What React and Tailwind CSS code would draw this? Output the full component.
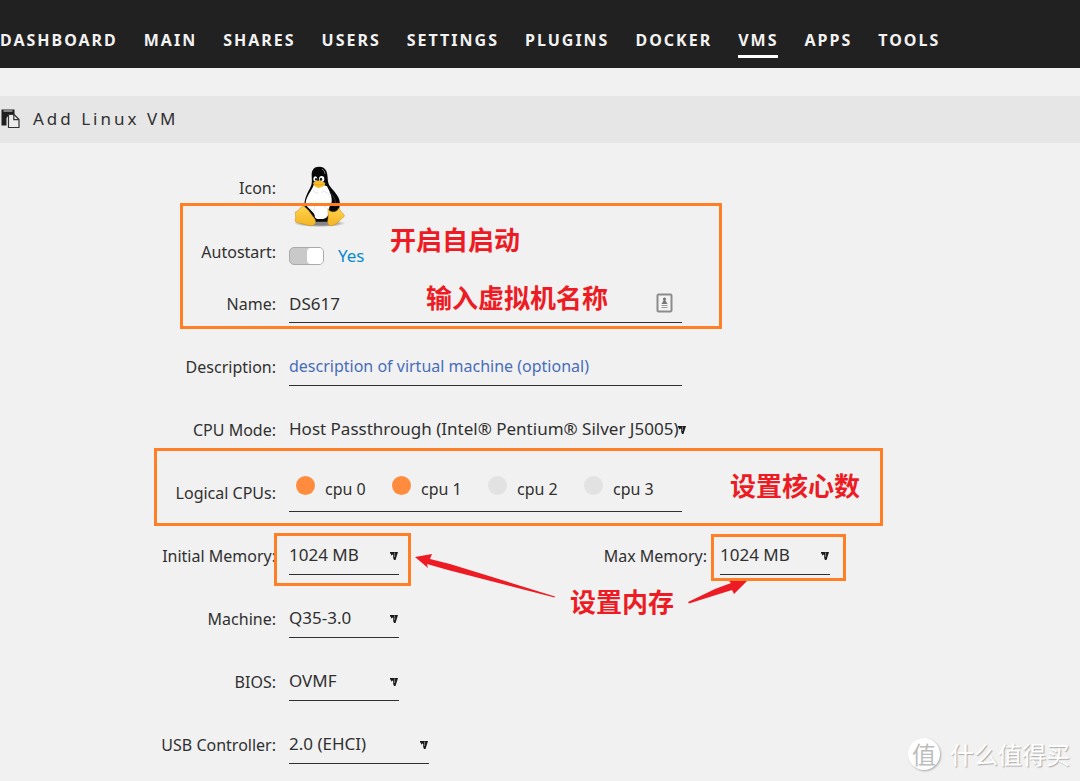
import React from "react";

const tabs = ["Dashboard", "Main", "Shares", "Users", "Settings", "Plugins", "Docker", "VMs", "Apps", "Tools"];

function PasteIcon() {
  return (
    <svg className="h-5 w-5 shrink-0" viewBox="0 0 20 20" aria-hidden="true">
      <path d="M1.5 0.5H14.5V6H9L6.5 9V16.5H1.5Z" fill="#1f1f1f" />
      <path d="M3.5 2H12.5" stroke="#e8e8e8" strokeWidth="1" />
      <path d="M8.5 5.5H14L19 10.5V18.5H8.5Z" fill="#ececec" stroke="#333" strokeWidth="1.2" strokeLinejoin="round" />
      <path d="M13.8 5.8V10.6H18.8" fill="none" stroke="#333" strokeWidth="1.2" />
    </svg>
  );
}

function Tux() {
  return (
    <svg className="h-[62px] w-[54px]" viewBox="42 28 162 186" role="img" aria-label="Linux">
      <defs>
        <radialGradient id="shade">
          <stop offset="0.5" stopColor="#000" stopOpacity="0.45" />
          <stop offset="1" stopColor="#000" stopOpacity="0" />
        </radialGradient>
        <linearGradient id="foot" x1="0" y1="0" x2="0" y2="1">
          <stop offset="0" stopColor="#ffd34d" />
          <stop offset="1" stopColor="#f3b424" />
        </linearGradient>
      </defs>
      <ellipse cx="122" cy="203" rx="78" ry="11" fill="url(#shade)" />
      <path d="M120 33C105 33 98 43 98 57C98 69 100 78 97 88C92 102 80 118 77 138C74 152 78 165 90 180L106 198H152L172 175C184 160 185 140 179 127C169 106 153 98 148 82C145 70 147 58 142 46C138 37 131 33 120 33Z" fill="#080808" />
      <path d="M104 88C98 106 82 120 80 142C80 154 99 162 107 178C106 190 116 191 128 190C141 189 147 184 149 171L151 154C163 142 160 120 144 92C132 86 116 86 104 88Z" fill="#fff" />
      <path d="M126 110Q140 103 151 118M102 105Q108 114 119 112M108 145L105 166M136 142L139 158" fill="none" stroke="#d7d7d7" strokeWidth="2" />
      <ellipse cx="109" cy="70" rx="6" ry="8" fill="#fff" />
      <ellipse cx="128" cy="70" rx="8" ry="9" fill="#fff" />
      <ellipse cx="111" cy="71" rx="3" ry="4" fill="#111" />
      <ellipse cx="126" cy="71" rx="3.5" ry="4.5" fill="#111" />
      <path d="M102 82C109 76 115 73 120 75C128 77 137 79 139 83C138 92 126 97 119 97C111 96 104 91 102 82Z" fill="#f8bc24" />
      <path d="M104 83C113 90 127 89 137 83" fill="none" stroke="#c98c18" strokeWidth="1.5" />
      <path d="M129 40Q138 45 138 55" fill="none" stroke="#777" strokeWidth="3" />
      <path d="M153 111C166 123 172 138 170 153" fill="none" stroke="#343434" strokeWidth="3" />
      <path d="M49 169C61 167 62 154 71 152C83 153 96 176 106 188C113 199 109 209 98 210C84 210 72 203 54 201C45 198 50 191 50 184Z" fill="url(#foot)" stroke="#c48a1a" strokeWidth="1.5" />
      <path d="M147 158C150 173 174 172 180 157C185 171 200 176 195 183C183 191 173 209 158 210C148 210 144 204 147 190C149 178 146 169 147 158Z" fill="url(#foot)" stroke="#c48a1a" strokeWidth="1.5" />
    </svg>
  );
}

function Row({ label, htmlFor, children }) {
  return (
    <div className="flex h-[63px] items-center gap-[13px]">
      <label htmlFor={htmlFor} className="w-[276px] shrink-0 text-right">{label}</label>
      {children}
    </div>
  );
}

function Select({ id, value, width }) {
  return (
    <div className={`relative h-[39px] shrink-0 border-b border-[#303030] ${width}`}>
      <select id={id} defaultValue={value} className="h-full w-full appearance-none bg-transparent text-[17px] outline-none">
        <option>{value}</option>
      </select>
      <svg className="pointer-events-none absolute right-px top-4 h-2 w-2" viewBox="0 0 8 8" aria-hidden="true">
        <path d="M0 0H8L5.5 8H4L3.2 6V3L2 2.5V4L0 1Z" fill="#1c1b1b" />
        <path d="M4.6 0.5V5" stroke="#f1f1f1" strokeWidth="0.5" />
      </svg>
    </div>
  );
}

function Cpu({ n, checked }) {
  return (
    <label className="flex w-24 shrink-0 items-center gap-[10px]">
      <input
        type="checkbox"
        defaultChecked={checked}
        className="mb-1.5 h-[19px] w-[19px] appearance-none rounded-full bg-[#e2e2e2] checked:bg-[#ff8c3e]"
      />
      cpu {n}
    </label>
  );
}

function Note({ place, children }) {
  return (
    <p className={`absolute whitespace-nowrap font-['Noto_Sans_CJK_SC',sans-serif] text-[26px] font-bold leading-8 text-[#ed1c24] ${place}`}>
      {children}
    </p>
  );
}

function Frame({ place }) {
  return <div className={`absolute border-3 border-[#ff7f27] ${place}`} />;
}

function Annotations() {
  return (
    <div className="pointer-events-none absolute inset-0">
      <Frame place="left-[180px] top-[203px] h-[126px] w-[542px]" />
      <Frame place="left-[154px] top-[448px] h-[78px] w-[729px]" />
      <Frame place="left-[274px] top-[533px] h-[53px] w-[137px]" />
      <Frame place="left-[711px] top-[534px] h-[47px] w-[135px]" />
      <Note place="left-[390px] top-[223px]">开启自启动</Note>
      <Note place="left-[426px] top-[281px]">输入虚拟机名称</Note>
      <Note place="left-[730px] top-[469px]">设置核心数</Note>
      <Note place="left-[570px] top-[585px]">设置内存</Note>
      <svg className="absolute left-[414px] top-[550px] h-[60px] w-[340px]" viewBox="414 550 340 60" aria-hidden="true">
        <path d="M415 557L432 554L430 559L450 564L555 596.5L554.5 597.5L448 570L427 564L428 568Z" fill="#ed1c24" />
        <path d="M688 602L715 589L731 583L729 581H747L734 594L732 590L716 595L689 603.5Z" fill="#ed1c24" />
      </svg>
    </div>
  );
}

export default function App() {
  return (
    <div className="relative min-h-screen overflow-hidden bg-[#f1f1f1] font-['Noto_Sans','Noto_Sans_CJK_SC',sans-serif] text-base text-[#303030]">
      <header className="h-[68px] bg-[#212121] pt-7">
        <nav className="flex gap-[26px] text-base font-bold uppercase leading-6 tracking-[2px] text-[#f2f2f2]">
          {tabs.map((tab) => (
            <a key={tab} href={`#${tab}`} className={tab === "VMs" ? "h-[30px] border-b-3 border-white" : "h-[30px]"}>
              {tab}
            </a>
          ))}
        </nav>
      </header>

      <h1 className="mt-7 flex h-[47px] items-center gap-[13px] bg-[#e6e6e6] pb-0.5 text-[17px] tracking-[3px]">
        <PasteIcon />
        Add Linux VM
      </h1>

      <form>
        <div className="flex h-[89px] items-center gap-[17px]">
          <span className="w-[276px] shrink-0 text-right">Icon:</span>
          <div className="pt-4"><Tux /></div>
        </div>
        <div className="flex h-10 items-center gap-[13px]">
          <label htmlFor="autostart" className="w-[276px] shrink-0 text-right">Autostart:</label>
          <div className="flex items-center gap-[14px] pt-2">
            <input
              id="autostart"
              type="checkbox"
              role="switch"
              defaultChecked
              className="h-[18px] w-[35px] appearance-none rounded-[5px] border border-[#aaa] bg-[#c9c9c9] before:ml-auto before:block before:h-4 before:w-4 before:rounded-[4px] before:bg-white"
            />
            <span className="text-[17px] text-[#0a8acb]">Yes</span>
          </div>
        </div>
        <Row label="Name:" htmlFor="name">
          <div className="flex h-[39px] w-[393px] items-center border-b border-[#303030]">
            <input id="name" defaultValue="DS617" className="h-full min-w-0 flex-1 bg-transparent text-[17px] outline-none" />
            <button type="button" aria-label="Fill in name" className="mr-[9px]">
              <svg className="h-5 w-[17px]" viewBox="0 0 17 20" aria-hidden="true">
                <rect x="1.5" y="1.5" width="14" height="17" rx="1" fill="#f4f4f4" stroke="#8c8c8c" strokeWidth="2" />
                <circle cx="8.5" cy="6" r="1.6" fill="#777" />
                <path d="M8.5 6L11.5 11H5.5Z" fill="#777" />
                <path d="M5.5 12.5H11.5M5.5 14.5H11.5" stroke="#999" strokeWidth="1.2" />
              </svg>
            </button>
          </div>
        </Row>
        <Row label="Description:" htmlFor="description">
          <input
            id="description"
            placeholder="description of virtual machine (optional)"
            className="h-[39px] w-[393px] border-b border-[#303030] bg-transparent outline-none placeholder:text-[#486dba]"
          />
        </Row>
        <Row label="CPU Mode:" htmlFor="mode">
          <Select id="mode" width="w-[398px]" value="Host Passthrough (Intel® Pentium® Silver J5005)" />
        </Row>
        <div className="flex h-[63px] items-center gap-[13px]">
          <span className="w-[276px] shrink-0 text-right">Logical CPUs:</span>
          <div className="flex h-[39px] w-[393px] items-start border-b border-[#303030] pl-[7px] pt-[3px]">
            <Cpu n={0} checked />
            <Cpu n={1} checked />
            <Cpu n={2} />
            <Cpu n={3} />
          </div>
        </div>
        <Row label="Initial Memory:" htmlFor="memory">
          <Select id="memory" width="w-[110px]" value="1024 MB" />
          <label htmlFor="max-memory" className="w-[295px] shrink-0 text-right">Max Memory:</label>
          <Select id="max-memory" width="w-[110px]" value="1024 MB" />
        </Row>
        <Row label="Machine:" htmlFor="machine">
          <Select id="machine" width="w-[110px]" value="Q35-3.0" />
        </Row>
        <Row label="BIOS:" htmlFor="bios">
          <Select id="bios" width="w-[110px]" value="OVMF" />
        </Row>
        <Row label="USB Controller:" htmlFor="usb">
          <Select id="usb" width="w-[140px]" value="2.0 (EHCI)" />
        </Row>
      </form>

      <Annotations />

      <div className="absolute bottom-[11px] right-[10px] flex items-center gap-[10px] font-['Noto_Sans_CJK_SC',sans-serif] text-white">
        <span className="flex h-8 w-8 items-center justify-center rounded-full bg-white text-2xl leading-8 text-[#bdbdbd] shadow-[1px_1px_2px_#aaa]">值</span>
        <span className="text-2xl leading-8 [text-shadow:1px_1px_1px_#aaa]">什么值得买</span>
      </div>
    </div>
  );
}
